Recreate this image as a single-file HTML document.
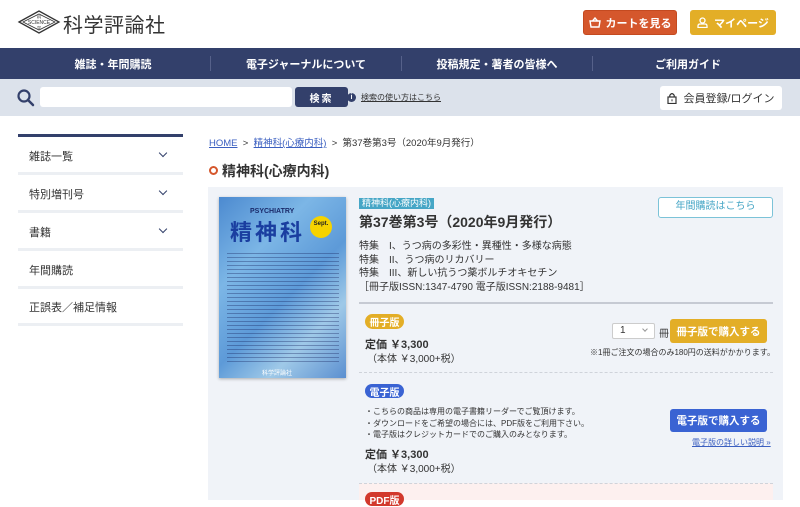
<!DOCTYPE html>
<html><head><meta charset="utf-8"><style>
*{margin:0;padding:0;box-sizing:border-box}
body{width:800px;height:500px;overflow:hidden;background:#fff;font-family:"Liberation Sans","Noto Sans CJK JP",sans-serif;color:#333;position:relative}
.a{position:absolute;white-space:nowrap}
.btn{position:absolute;border-radius:3px;color:#fff;font-size:11px;font-weight:bold;display:flex;align-items:center;justify-content:center}
.side{position:absolute;left:18px;width:165px;font-size:11px;color:#333}
.sep{position:absolute;left:18px;width:165px;height:3px;background:#eceff3}
.chev{position:absolute;left:160px;width:6px;height:6px;border-right:1.5px solid #33406b;border-bottom:1.5px solid #33406b;transform:rotate(45deg)}
.pill{position:absolute;border-radius:8px;color:#fff;font-size:10px;font-weight:bold;display:flex;align-items:center;justify-content:center}
.t10{font-size:10px;color:#333}
</style></head><body>
<svg class="a" style="left:17px;top:9px" width="44" height="26" viewBox="0 0 44 26"><path d="M2 13 L22 2 L42 13 L22 24 Z" fill="none" stroke="#333" stroke-width="1.3"/><path d="M6 13 L22 5 L38 13 L22 21 Z" fill="none" stroke="#333" stroke-width="0.8"/><text x="22" y="15" font-size="5" text-anchor="middle" font-family="Liberation Sans" fill="#333">SCIENCE</text><text x="22" y="9.5" font-size="4" text-anchor="middle" fill="#333">科</text><text x="22" y="20.5" font-size="4" text-anchor="middle" fill="#333">学</text></svg>
<div class="a" style="left:63px;top:9px;font-size:20px;color:#333;letter-spacing:0.5px">科学評論社</div>
<div class="btn" style="left:583px;top:10px;width:94px;height:25px;background:#d5572c;border:1px solid #c44a20">
<svg width="12" height="11" viewBox="0 0 12 11" style="margin-right:5px"><path d="M1 4 H11 L10 10 H2 Z M3.5 4 L6 1 L8.5 4" fill="none" stroke="#fff" stroke-width="1.4"/></svg>カートを見る</div>
<div class="btn" style="left:690px;top:10px;width:86px;height:25px;background:#e3ae27">
<svg width="11" height="11" viewBox="0 0 11 11" style="margin-right:6px"><circle cx="5.5" cy="3.5" r="2.5" fill="none" stroke="#fff" stroke-width="1.3"/><path d="M1 10.5 V9 Q1 7 3 7 H8 Q10 7 10 9 V10.5 Z" fill="none" stroke="#fff" stroke-width="1.3"/></svg>マイページ</div>
<div class="a" style="left:0;top:48px;width:800px;height:31px;background:#33406b"></div>
<div class="a" style="left:0;top:48px;width:800px;height:31px;display:flex;color:#fff;font-size:11px;font-weight:bold;align-items:center">
<div style="width:210px;text-align:center;padding-left:16px">雑誌・年間購読</div>
<div style="width:1px;height:15px;background:#56618a"></div>
<div style="width:190px;text-align:center">電子ジャーナルについて</div>
<div style="width:1px;height:15px;background:#56618a"></div>
<div style="width:190px;text-align:center">投稿規定・著者の皆様へ</div>
<div style="width:1px;height:15px;background:#56618a"></div>
<div style="width:190px;text-align:center">ご利用ガイド</div>
</div>
<div class="a" style="left:0;top:79px;width:800px;height:37px;background:#dce2eb"></div>
<svg class="a" style="left:16px;top:88px" width="20" height="20" viewBox="0 0 20 20"><circle cx="8" cy="8" r="5.5" fill="none" stroke="#33406b" stroke-width="2.2"/><path d="M12 12 L17 17" stroke="#33406b" stroke-width="2.5" stroke-linecap="round"/></svg>
<div class="a" style="left:40px;top:87px;width:252px;height:20px;background:#fff;border-radius:3px"></div>
<div class="btn" style="left:295px;top:87px;width:53px;height:20px;background:#33406b;font-size:10px;letter-spacing:2px">検索</div>
<div class="a" style="left:347px;top:93px;width:9px;height:9px;border-radius:50%;background:#33406b;color:#fff;font-size:7px;text-align:center;line-height:9px;font-weight:bold">i</div>
<div class="a" style="left:361px;top:92px;font-size:8px;color:#333;text-decoration:underline">検索の使い方はこちら</div>
<div class="a" style="left:660px;top:86px;width:122px;height:24px;background:#fff;border-radius:3px;font-size:11px;color:#333;display:flex;align-items:center;justify-content:center">
<svg width="10" height="12" viewBox="0 0 10 12" style="margin-right:6px"><rect x="1" y="5" width="8" height="6.5" fill="none" stroke="#333" stroke-width="1.2"/><path d="M2.8 5 V3.3 Q5 0 7.2 3.3 V5" fill="none" stroke="#333" stroke-width="1.2"/><rect x="4.5" y="7.3" width="1" height="2" fill="#333"/></svg>会員登録/ログイン</div>
<div class="a" style="left:18px;top:134px;width:165px;height:3px;background:#33406b"></div>
<div class="side" style="top:148px">　雑誌一覧</div><div class="chev" style="top:150px"></div>
<div class="sep" style="top:172px"></div>
<div class="side" style="top:186px">　特別増刊号</div><div class="chev" style="top:188px"></div>
<div class="sep" style="top:210px"></div>
<div class="side" style="top:224px">　書籍</div><div class="chev" style="top:226px"></div>
<div class="sep" style="top:248px"></div>
<div class="side" style="top:262px">　年間購読</div>
<div class="sep" style="top:286px"></div>
<div class="side" style="top:299px">　正誤表／補足情報</div>
<div class="sep" style="top:323px"></div>
<div class="a" style="left:209px;top:135px;font-size:9.5px;color:#333"><span style="color:#3b5fc0;text-decoration:underline">HOME</span>&nbsp; &gt; &nbsp;<span style="color:#3b5fc0;text-decoration:underline">精神科(心療内科)</span>&nbsp; &gt; &nbsp;第37巻第3号（2020年9月発行）</div>
<div class="a" style="left:209px;top:166px;width:9px;height:9px;border-radius:50%;border:2px solid #d5572c"></div>
<div class="a" style="left:222px;top:161px;font-size:14px;font-weight:bold;color:#333">精神科(心療内科)</div>
<div class="a" style="left:208px;top:187px;width:575px;height:313px;background:#f0f3f8"></div>
<div class="a" style="left:359px;top:483px;width:414px;height:17px;background:#fdf0ef"></div>
<div class="pill" style="left:365px;top:492px;width:39px;height:14px;background:#d2392c">PDF版</div>
<div class="a" style="left:219px;top:197px;width:127px;height:181px;background:linear-gradient(135deg,#4c8ad0,#7cb6e6 30%,#5d9ad8 55%,#9fc9e8 75%,#5b8fd0);box-shadow:0 1px 3px rgba(0,0,0,.3)"></div>
<div class="a" style="left:227px;top:253px;width:112px;height:110px;background:repeating-linear-gradient(180deg,rgba(20,30,90,.35) 0 1px,transparent 1px 4px)"></div>
<div class="a" style="left:250px;top:208px;font-size:7px;font-weight:bold;color:#1a2a6a">PSYCHIATRY</div>
<div class="a" style="left:230px;top:215px;font-size:22px;font-weight:bold;color:#1a3ea0;letter-spacing:3px">精神科</div>
<div class="a" style="left:310px;top:216px;width:22px;height:22px;border-radius:50%;background:#f6d300;font-size:6px;font-weight:bold;color:#222;text-align:center;line-height:16px">Sept.</div>
<div class="a" style="left:262px;top:368px;font-size:6px;color:#fff">科学評論社</div>
<div class="a" style="left:359px;top:198px;height:11px;padding:0 3px;background:#46a6c6;color:#fff;font-size:9px;line-height:11px">精神科(心療内科)</div>
<div class="a" style="left:359px;top:212px;font-size:14px;font-weight:bold;color:#333">第37巻第3号（2020年9月発行）</div>
<div class="a" style="left:658px;top:197px;width:115px;height:21px;border:1.5px solid #7cc3d8;border-radius:3px;background:#fff;color:#46a6c6;font-size:10px;text-align:center;line-height:18px">年間購読はこちら</div>
<div class="a t10" style="left:359px;top:240px;line-height:13.5px">特集　I、うつ病の多彩性・異種性・多様な病態<br>特集　II、うつ病のリカバリー<br>特集　III、新しい抗うつ薬ボルチオキセチン<br>［冊子版ISSN:1347-4790 電子版ISSN:2188-9481］</div>
<div class="a" style="left:359px;top:302px;width:414px;height:2px;background:#c6cad3"></div>
<div class="pill" style="left:365px;top:314px;width:39px;height:15px;background:#e3ae27">冊子版</div>
<div class="a" style="left:365px;top:336px;font-size:11px;font-weight:bold">定価 ￥3,300</div>
<div class="a t10" style="left:367px;top:350px">（本体 ￥3,000+税）</div>
<div class="a" style="left:612px;top:323px;width:43px;height:16px;background:#fff;border:1px solid #ccc;border-radius:2px;font-size:10px;padding-left:7px;line-height:14px">1<span style="position:absolute;left:30px;top:3px;width:4px;height:4px;border-right:1px solid #999;border-bottom:1px solid #999;transform:rotate(45deg)"></span></div>
<div class="a t10" style="left:659px;top:325px">冊</div>
<div class="btn" style="left:670px;top:319px;width:97px;height:24px;background:#e3ae27;font-size:10.5px">冊子版で購入する</div>
<div class="a" style="left:590px;top:347px;font-size:8px;color:#333">※1冊ご注文の場合のみ180円の送料がかかります。</div>
<div class="a" style="left:359px;top:372px;width:414px;border-top:1px dashed #cfd3da"></div>
<div class="pill" style="left:365px;top:384px;width:39px;height:14px;background:#3a63d3">電子版</div>
<div class="a" style="left:365px;top:406px;font-size:8px;color:#333;line-height:11.5px">・こちらの商品は専用の電子書籍リーダーでご覧頂けます。<br>・ダウンロードをご希望の場合には、PDF版をご利用下さい。<br>・電子版はクレジットカードでのご購入のみとなります。</div>
<div class="a" style="left:365px;top:446px;font-size:11px;font-weight:bold">定価 ￥3,300</div>
<div class="a t10" style="left:367px;top:460px">（本体 ￥3,000+税）</div>
<div class="btn" style="left:670px;top:409px;width:97px;height:23px;background:#3a63d3;font-size:10.5px">電子版で購入する</div>
<div class="a" style="left:692px;top:437px;font-size:8px;color:#3b5fc0;text-decoration:underline">電子版の詳しい説明 »</div>
<div class="a" style="left:359px;top:483px;width:414px;border-top:1px dashed #cfd3da"></div>
</body></html>
